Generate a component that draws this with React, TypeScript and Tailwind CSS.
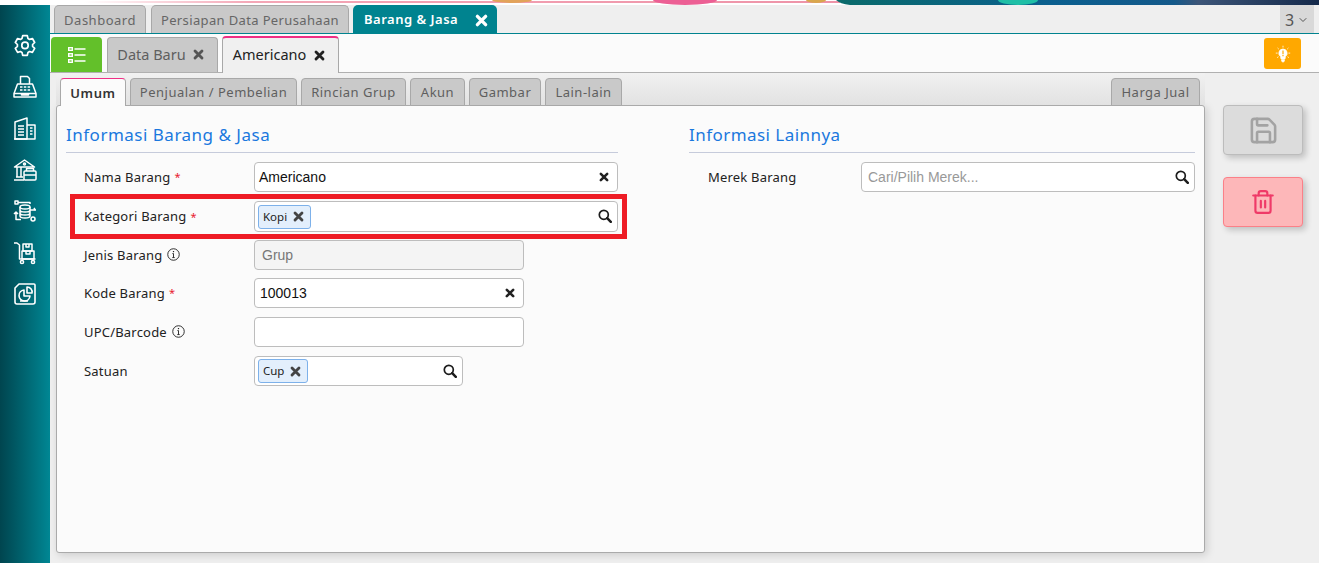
import { ChevronDown, Save, Trash2 } from "lucide-react";
import type { ReactNode } from "react";

function Banner() {
  return (
    <svg className="block h-[5px] w-full shrink-0" viewBox="0 0 1319 5" preserveAspectRatio="none">
      <defs>
        <linearGradient id="pinkLine" x1="0" x2="1" y1="0" y2="0">
          <stop offset="0" stopColor="#ffffff" />
          <stop offset="0.1" stopColor="#ffffff" />
          <stop offset="0.3" stopColor="#f4a6b6" />
          <stop offset="1" stopColor="#ee93a8" />
        </linearGradient>
        <linearGradient id="navy" x1="0" x2="1" y1="0" y2="0">
          <stop offset="0" stopColor="#0a6b6a" />
          <stop offset="0.45" stopColor="#0b5f8f" />
          <stop offset="0.7" stopColor="#14598a" />
          <stop offset="0.75" stopColor="#3c5578" />
          <stop offset="1" stopColor="#14294a" />
        </linearGradient>
      </defs>
      <rect width="1319" height="5" fill="#fff" />
      <rect y="1" width="840" height="2" fill="url(#pinkLine)" />
      <ellipse cx="512" cy="0" rx="20" ry="3" fill="#e2a35a" />
      <ellipse cx="685" cy="0" rx="32" ry="5" fill="#ec5f94" />
      <ellipse cx="816" cy="0" rx="10" ry="3" fill="#d9a74e" />
      <path d="M836 0H1319V5H850Q840 4 836 0Z" fill="url(#navy)" />
      <ellipse cx="1018" cy="0" rx="20" ry="5" fill="#1fbfa6" />
    </svg>
  );
}

function Gear() {
  return (
    <svg viewBox="0 0 24 24" className="h-[24px] w-[24px]" fill="none" stroke="white" strokeWidth="1.7" strokeLinejoin="round">
      <path d="M9.7 2.6h4.6l.7 2.9 1.6.9 2.8-.9 2.3 4-2.1 2 0 1.9 2.1 2-2.3 4-2.8-.9-1.6.9-.7 2.9H9.7L9 19.4l-1.6-.9-2.8.9-2.3-4 2.1-2 0-1.9-2.1-2 2.3-4 2.8.9L9 5.5z" />
      <circle cx="12" cy="12.4" r="3.2" />
    </svg>
  );
}

function Fax() {
  return (
    <svg viewBox="0 0 24 24" className="h-[24px] w-[24px]" fill="none" stroke="white" strokeWidth="1.5" strokeLinejoin="round">
      <path d="M7.5 9V1.5h7l2 2V9" />
      <path d="M4.5 9h15l3.5 9.5V22H1v-3.5z" />
      <path d="M1 18.5h22M8.5 18.5v1.5h7v-1.5" />
      <path d="M7 12h2.5M10.8 12h2.5M14.6 12h2.5M7 15h2.5M10.8 15h2.5M14.6 15h2.5" strokeWidth="1.4" />
    </svg>
  );
}

function Office() {
  return (
    <svg viewBox="0 0 24 24" className="h-[24px] w-[24px]" fill="none" stroke="white" strokeWidth="1.5" strokeLinejoin="round">
      <path d="M2 23V6l12-4v21z" />
      <path d="M14 9h8v14H1" />
      <path d="M5 10h6M5 13h6M5 16h6M5 19h6M17 12h2.5M17 15h2.5M17 18h2.5" />
    </svg>
  );
}

function Bank() {
  return (
    <svg viewBox="0 0 24 24" className="h-[24px] w-[24px]" fill="none" stroke="white" strokeWidth="1.5" strokeLinejoin="round">
      <path d="M1.5 9 11.5 2l10 7z" />
      <circle cx="11.5" cy="6" r="1" />
      <path d="M4 9v10M8 9v10M1 22h10M3 19h7" />
      <rect x="11" y="13" width="12" height="9" rx="1" />
      <path d="M13.5 13v-2.5h7V13M11 17h12" />
    </svg>
  );
}

function DataFlow() {
  return (
    <svg viewBox="0 0 24 24" className="h-[24px] w-[24px]" fill="none" stroke="white" strokeWidth="1.5" strokeLinejoin="round">
      <ellipse cx="12" cy="8" rx="5" ry="2" />
      <path d="M7 8v9c0 1.2 2.2 2 5 2s5-.8 5-2V8M7 11c0 1.2 2.2 2 5 2s5-.8 5-2M7 14c0 1.2 2.2 2 5 2s5-.8 5-2" />
      <path d="M2 2h3v3H2zM5 3.5h12v1.5M21 9l1.5 2.5M17 11h6M1 15l2-2 2 2M3 13v7.5h5" />
      <circle cx="20" cy="20" r="2" />
    </svg>
  );
}

function Cart() {
  return (
    <svg viewBox="0 0 24 24" className="h-[24px] w-[24px]" fill="none" stroke="white" strokeWidth="1.5" strokeLinejoin="round">
      <path d="M1 2h3l2.5 2v14h16" />
      <rect x="10" y="3" width="9" height="7" />
      <path d="M13 3v3h3V3" />
      <rect x="9" y="10" width="12" height="8" />
      <path d="M13 10v3h4v-3" />
      <circle cx="9" cy="21" r="1.6" />
      <circle cx="20" cy="21" r="1.6" />
    </svg>
  );
}

function ReportPie() {
  return (
    <svg viewBox="0 0 24 24" className="h-[24px] w-[24px]" fill="none" stroke="white" strokeWidth="1.6" strokeLinejoin="round">
      <path d="M6 2h15a1 1 0 0 1 1 1v17a2 2 0 0 1-2 2H4a2 2 0 0 1-2-2V6z" />
      <path d="M11 8a5.5 5.5 0 1 0 6 6h-6z" />
      <path d="M14 5a5 5 0 0 1 5 6h-5z" />
      <path d="M11 19.5v-1M7 19h8" />
    </svg>
  );
}

function ListIcon() {
  return (
    <svg viewBox="0 0 18 16" className="h-[16px] w-[18px]" fill="none" stroke="white" strokeWidth="1.4">
      <rect x="0.7" y="0.7" width="3.6" height="2.6" />
      <rect x="0.7" y="6.7" width="3.6" height="2.6" />
      <rect x="0.7" y="12.7" width="3.6" height="2.6" />
      <path d="M6.5 2h11M6.5 8h11M6.5 14h11" strokeWidth="1.7" />
    </svg>
  );
}

function Bulb() {
  return (
    <svg viewBox="0 0 20 20" className="h-[18px] w-[18px]" fill="none" stroke="white">
      <path d="M10 4.5a4.5 4.5 0 0 0-2.6 8.2l.4 2.8h4.4l.4-2.8A4.5 4.5 0 0 0 10 4.5z" fill="white" />
      <path d="M8.4 16.5h3.2l-.6 2.2H9z" fill="white" />
      <path d="M10 6v4.2M10 11v1.6" stroke="#ffa800" strokeWidth="1.3" />
      <path d="M10 .8v2M4 3.3l1.3 1.3M16 3.3l-1.3 1.3M2 9h2M16 9h2M3.5 14l1.5-1M16.5 14l-1.5-1" strokeWidth=".9" />
    </svg>
  );
}

function InfoIcon() {
  return (
    <svg viewBox="0 0 14 14" className="mb-[3px] ml-[5px] h-[13px] w-[13px]" fill="none" stroke="#222">
      <circle cx="7" cy="7" r="6.2" strokeWidth="1" />
      <path d="M7 6v4.3M5.7 10.3h2.6M5.8 6h1.2" strokeWidth="1" />
      <path d="M7 3.2v1.3" strokeWidth="1.3" />
    </svg>
  );
}

function CloseIcon({ className }: { className: string }) {
  return (
    <svg viewBox="0 0 12 12" className={className} fill="none" stroke="currentColor" strokeWidth="3.1" strokeLinecap="round">
      <path d="M2.2 2.2 9.8 9.8M9.8 2.2 2.2 9.8" />
    </svg>
  );
}

function SearchIcon() {
  return (
    <svg viewBox="0 0 14 14" className="mb-[1px] h-[14px] w-[14px] text-[#1c1c1c]" fill="none" stroke="currentColor">
      <circle cx="5.8" cy="5.8" r="4.5" strokeWidth="1.7" />
      <path d="M9.2 9.2 12.8 12.8" strokeWidth="2.5" strokeLinecap="round" />
    </svg>
  );
}

function Tab({ label, width }: { label: string; width: string }) {
  return (
    <div
      className={`flex h-[28px] items-center justify-center rounded-t-[4px] border border-[#a8a8a8] bg-[#c9c9c9] pt-[2px] text-[13px] tracking-[0.5px] text-[#5f5f5f] ${width}`}
    >
      {label}
    </div>
  );
}

function FieldRow({ label, required, info, children }: { label: string; required?: boolean; info?: boolean; children: ReactNode }) {
  return (
    <div className="flex items-center">
      <div className="flex w-[188px] shrink-0 items-center pl-[18px] pt-[1px] text-[13px] tracking-[0.2px] text-[#222]">
        <span>{label}</span>
        {required && <span className="ml-[4px] text-[11px] text-[#e8212e]">*</span>}
        {info && <InfoIcon />}
      </div>
      {children}
    </div>
  );
}

function Box({ className, children }: { className: string; children?: ReactNode }) {
  return (
    <div className={`flex items-center rounded-[4px] border border-[#bdbdbd] font-['Liberation_Sans',sans-serif] text-[14px] ${className}`}>
      {children}
    </div>
  );
}

function Chip({ label }: { label: string }) {
  return (
    <span className="flex h-[24px] items-center gap-[6px] rounded-[3px] border border-[#7db1ea] bg-[#e3effc] pl-[4px] pr-[6px] font-['Noto_Sans',sans-serif] text-[11.5px] text-[#222]">
      {label}
      <CloseIcon className="h-[11px] w-[11px] text-[#444]" />
    </span>
  );
}

export default function App() {
  return (
    <div className="flex h-[563px] w-[1328px] flex-col overflow-hidden bg-white font-['Noto_Sans',sans-serif]">
      <div className="flex flex-1">
        <div className="w-[1319px]">
          <Banner />
          <div className="flex h-[558px]">
            {/* Sidebar */}
            <div className="flex w-[50px] shrink-0 flex-col items-center gap-[17.5px] bg-gradient-to-r from-[#00454f] to-[#008794] pt-[28px]">
              <Gear />
              <Fax />
              <Office />
              <Bank />
              <DataFlow />
              <Cart />
              <ReportPie />
            </div>

            <div className="flex min-w-0 flex-1 flex-col bg-[#efefef]">
              {/* Top tabs */}
              <div className="flex h-[29px] shrink-0 items-end border-b border-[#00838f] pl-[4px] text-[13px]">
                <div className="flex h-[28px] w-[92px] items-center justify-center rounded-t-[5px] border border-b-0 border-[#a8a8a8] bg-[#c9c9c9] pt-[2px] tracking-[0.5px] text-[#666]">
                  Dashboard
                </div>
                <div className="ml-[5px] flex h-[28px] w-[198px] items-center justify-center rounded-t-[5px] border border-b-0 border-[#a8a8a8] bg-[#c9c9c9] pt-[2px] tracking-[0.36px] text-[#666]">
                  Persiapan Data Perusahaan
                </div>
                <div className="ml-[4px] flex h-[28px] w-[144px] items-center rounded-t-[5px] bg-[#00838f] pl-[11px] pt-[2px] font-semibold tracking-[0.5px] text-white">
                  Barang &amp; Jasa
                  <CloseIcon className="ml-[17px] h-[13px] w-[13px]" />
                </div>
                <div className="ml-auto mr-[5px] flex h-[28px] w-[34px] items-center justify-center gap-[3px] bg-[#d9d9d9] pt-[1px] text-[16px] text-[#555]">
                  3
                  <ChevronDown className="h-[12px] w-[12px]" />
                </div>
              </div>

              {/* Record tabs */}
              <div className="flex h-[39px] shrink-0 items-end border-b border-[#b0b0b0] bg-[#fbfbfb] pl-[1px]">
                <div className="flex h-[35px] w-[51px] items-center justify-center rounded-t-[4px] bg-[#63c02a]">
                  <ListIcon />
                </div>
                <div className="ml-[5px] flex h-[35px] w-[111px] items-center justify-center gap-[7px] rounded-t-[4px] border border-b-0 border-[#a8a8a8] bg-[#c9c9c9] pb-[1px] pr-[4px] text-[14.5px] text-[#5f5f5f]">
                  Data Baru
                  <CloseIcon className="h-[11px] w-[11px] text-[#555]" />
                </div>
                <div className="relative z-10 -mb-px ml-[4px] flex h-[37px] w-[117px] items-center justify-center gap-[8px] rounded-t-[4px] border border-b-0 border-t-2 border-[#a8a8a8] border-t-[#ee2f85] bg-[#f0f0f0] pb-[1px] pr-[3px] text-[14.5px] text-[#222]">
                  Americano
                  <CloseIcon className="h-[11px] w-[11px] text-[#222]" />
                </div>
                <div className="mb-[3px] ml-auto mr-[18px] flex h-[31px] w-[37px] items-center justify-center rounded-[3px] bg-[#ffa800]">
                  <Bulb />
                </div>
              </div>

              {/* Body */}
              <div className="flex min-h-0 flex-1 pl-[6px]">
                <div className="flex w-[1149px] shrink-0 flex-col pb-[10px]">
                  <div className="relative z-10 flex h-[32px] shrink-0 items-end gap-[4px] bg-gradient-to-b from-[#f1f1f1] to-[#e2e2e2] pl-[4px] pr-[5px]">
                    <div className="-mb-px flex h-[28px] w-[66px] items-center justify-center rounded-t-[4px] border border-b-0 border-[#a8a8a8] border-t-[#ee2f85] bg-[#fbfbfb] pt-[2px] text-[13px] font-semibold tracking-[0.6px] text-[#333]">
                      Umum
                    </div>
                    <div className="-mb-px flex items-end gap-[4px]">
                      <Tab label="Penjualan / Pembelian" width="w-[167px]" />
                      <Tab label="Rincian Grup" width="w-[105px]" />
                      <Tab label="Akun" width="w-[55px]" />
                      <Tab label="Gambar" width="w-[72px]" />
                      <Tab label="Lain-lain" width="w-[77px]" />
                    </div>
                    <div className="-mb-px ml-auto">
                      <Tab label="Harga Jual" width="w-[89px]" />
                    </div>
                  </div>

                  <div className="flex min-h-0 flex-1 gap-[71px] rounded-[3px] border border-[#aaaaaa] bg-[#fbfbfb] px-[9px] shadow-[2px_2px_8px_rgba(0,0,0,0.15)]">
                    {/* Left column */}
                    <div className="relative w-[552px] shrink-0">
                      <div className="flex h-[47px] items-end border-b border-[#c6cbdb] pb-[5px] text-[17px] leading-[24px] tracking-[0.5px] text-[#1a78de]">
                        Informasi Barang &amp; Jasa
                      </div>
                      <div className="mt-[9px] flex flex-col">
                        <FieldRow label="Nama Barang" required>
                          <Box className="h-[30px] w-[364px] justify-between bg-white pl-[4px] pr-[8px] text-[#111]">
                            Americano
                            <CloseIcon className="h-[10px] w-[10px] text-[#222]" />
                          </Box>
                        </FieldRow>
                        <div className="mt-[9px]">
                          <FieldRow label="Kategori Barang" required>
                            <Box className="h-[31px] w-[364px] justify-between bg-white pl-[3px] pr-[5px] text-[#111]">
                              <Chip label="Kopi" />
                              <SearchIcon />
                            </Box>
                          </FieldRow>
                        </div>
                        <div className="mt-[8px]">
                          <FieldRow label="Jenis Barang" info>
                            <Box className="h-[30px] w-[270px] bg-[#f4f4f4] pl-[7px] text-[#777]">Grup</Box>
                          </FieldRow>
                        </div>
                        <div className="mt-[8px]">
                          <FieldRow label="Kode Barang" required>
                            <Box className="h-[30px] w-[270px] justify-between bg-white pl-[5px] pr-[8px] text-[#111]">
                              100013
                              <CloseIcon className="h-[10px] w-[10px] text-[#222]" />
                            </Box>
                          </FieldRow>
                        </div>
                        <div className="mt-[9px]">
                          <FieldRow label="UPC/Barcode" info>
                            <Box className="h-[30px] w-[270px] bg-white" />
                          </FieldRow>
                        </div>
                        <div className="mt-[9px]">
                          <FieldRow label="Satuan">
                            <Box className="h-[30px] w-[209px] justify-between bg-white pl-[3px] pr-[5px] text-[#111]">
                              <Chip label="Cup" />
                              <SearchIcon />
                            </Box>
                          </FieldRow>
                        </div>
                      </div>
                      {/* Red annotation */}
                      <div className="pointer-events-none absolute left-[4px] top-[88px] h-[45px] w-[557px] border-[5px] border-[#ee1c25]" />
                    </div>

                    {/* Right column */}
                    <div className="w-[506px] shrink-0">
                      <div className="flex h-[47px] items-end border-b border-[#c6cbdb] pb-[5px] text-[17px] leading-[24px] tracking-[0.45px] text-[#1a78de]">
                        Informasi Lainnya
                      </div>
                      <div className="mt-[9px] flex items-center">
                        <div className="w-[172px] shrink-0 pl-[19px] pt-[1px] text-[13px] tracking-[0.2px] text-[#222]">Merek Barang</div>
                        <Box className="h-[30px] w-[334px] justify-between bg-white pl-[6px] pr-[5px] text-[#999]">
                          Cari/Pilih Merek...
                          <SearchIcon />
                        </Box>
                      </div>
                    </div>
                  </div>
                </div>

                {/* Action buttons */}
                <div className="ml-[18px] flex w-[80px] shrink-0 flex-col gap-[22px] pt-[32px]">
                  <div className="flex h-[50px] items-center justify-center rounded-[4px] border border-[#bcbcbc] bg-[#dcdcdc] shadow-[3px_3px_6px_rgba(0,0,0,0.2)]">
                    <Save className="h-[31px] w-[31px] text-[#a3a3a3]" strokeWidth={2} />
                  </div>
                  <div className="flex h-[50px] items-center justify-center rounded-[4px] border border-[#fb8088] bg-[#fdb7b9] shadow-[3px_3px_6px_rgba(0,0,0,0.2)]">
                    <Trash2 className="h-[26px] w-[26px] text-[#ef3a68]" strokeWidth={2} />
                  </div>
                </div>
              </div>
            </div>
          </div>
        </div>
        <div className="w-[9px] bg-white" />
      </div>
    </div>
  );
}
